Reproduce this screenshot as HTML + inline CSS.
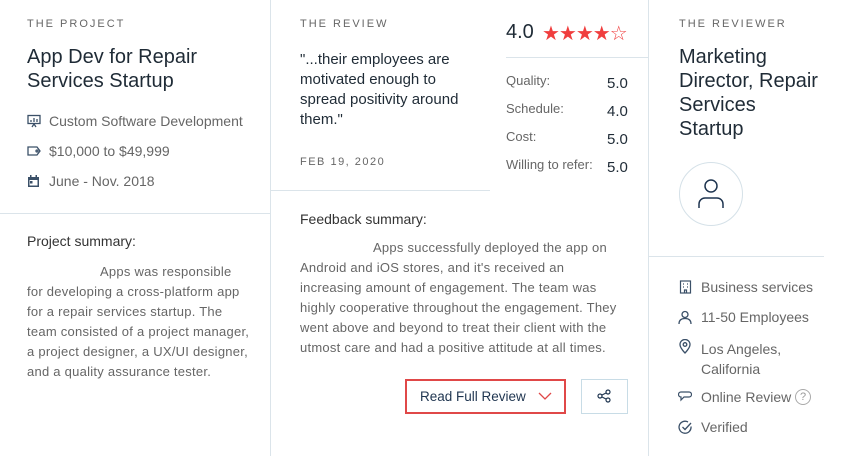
<!DOCTYPE html>
<html><head><style>
*{margin:0;padding:0;box-sizing:border-box}
body{width:852px;height:456px;background:#fff;font-family:"Liberation Sans",sans-serif;position:relative;overflow:hidden;color:#555}
.a{position:absolute;white-space:nowrap}
.lab{font-size:11px;letter-spacing:2px;color:#666}
.h{font-size:20px;color:#1f2b36;line-height:24px}
.g{font-size:14px;color:#666}
.p{font-size:13px;color:#666;line-height:20px;letter-spacing:0.25px}
.v{position:absolute;width:1px;background:#dbe4ea}
.hl{position:absolute;height:1px;background:#dbe4ea}
svg{position:absolute}
</style></head><body>
<div class="v" style="left:270px;top:0;height:456px"></div>
<div class="v" style="left:648px;top:0;height:456px"></div>
<div class="hl" style="left:0;top:213px;width:270px"></div>
<div class="hl" style="left:270px;top:190px;width:220px"></div>
<div class="hl" style="left:506px;top:57px;width:142px"></div>
<div class="hl" style="left:648px;top:256px;width:176px"></div>

<div class="a lab" style="left:27px;top:18px">THE PROJECT</div>
<div class="a h" style="left:27px;top:45px">App Dev for Repair<br>Services Startup</div>
<svg style="left:27px;top:114px" width="14" height="14" viewBox="0 0 14 14" fill="none" stroke="#3b5068" stroke-width="1.3"><rect x="1" y="1.5" width="12" height="8"/><path d="M4 8V6M7 8V4M10 8V5M5 13l2-3 2 3"/></svg>
<div class="a g" style="left:49px;top:113px">Custom Software Development</div>
<svg style="left:27px;top:145px" width="14" height="12" viewBox="0 0 14 12" fill="none" stroke="#3b5068" stroke-width="1.3"><path d="M1 2h9l3 4-3 4H1z"/><circle cx="10" cy="6" r="1"/></svg>
<div class="a g" style="left:49px;top:143px">$10,000 to $49,999</div>
<svg style="left:27px;top:174px" width="13" height="14" viewBox="0 0 13 14" fill="#3b5068"><path d="M1 3h11v10H1zM2.5 6v5.5h8V6z"/><rect x="3" y="1" width="1.5" height="3"/><rect x="8.5" y="1" width="1.5" height="3"/><rect x="3" y="7" width="2.5" height="2.5"/></svg>
<div class="a g" style="left:49px;top:173px">June - Nov. 2018</div>
<div class="a" style="left:27px;top:233px;font-size:14px;color:#333">Project summary:</div>
<div class="a p" style="left:27px;top:262px"><span style="display:inline-block;width:73px"></span>Apps was responsible<br>for developing a cross-platform app<br>for a repair services startup. The<br>team consisted of a project manager,<br>a project designer, a UX/UI designer,<br>and a quality assurance tester.</div>

<div class="a lab" style="left:300px;top:18px">THE REVIEW</div>
<div class="a" style="left:300px;top:50px;font-size:15px;line-height:20px;color:#1f2b36">"...their employees are<br>motivated enough to<br>spread positivity around<br>them."</div>
<div class="a" style="left:300px;top:156px;font-size:11px;letter-spacing:1.5px;color:#666">FEB 19, 2020</div>
<div class="a" style="left:506px;top:21px;font-size:20px;color:#1f2b36">4.0</div>
<div class="a" style="left:542px;top:21px;font-size:20px;color:#f03e3e;letter-spacing:-1px">★★★★☆</div>
<div class="a g" style="left:506px;top:73px;font-size:13px">Quality:</div><div class="a" style="left:607px;top:75px;font-size:15px;color:#1f2b36">5.0</div>
<div class="a g" style="left:506px;top:101px;font-size:13px">Schedule:</div><div class="a" style="left:607px;top:103px;font-size:15px;color:#1f2b36">4.0</div>
<div class="a g" style="left:506px;top:129px;font-size:13px">Cost:</div><div class="a" style="left:607px;top:131px;font-size:15px;color:#1f2b36">5.0</div>
<div class="a g" style="left:506px;top:157px;font-size:13px">Willing to refer:</div><div class="a" style="left:607px;top:159px;font-size:15px;color:#1f2b36">5.0</div>
<div class="a" style="left:300px;top:211px;font-size:14px;color:#333">Feedback summary:</div>
<div class="a p" style="left:300px;top:238px"><span style="display:inline-block;width:73px"></span>Apps successfully deployed the app on<br>Android and iOS stores, and it's received an<br>increasing amount of engagement. The team was<br>highly cooperative throughout the engagement. They<br>went above and beyond to treat their client with the<br>utmost care and had a positive attitude at all times.</div>
<div class="a" style="left:405px;top:379px;width:161px;height:35px;border:2px solid #e04848;font-size:13.5px;color:#1f3550;padding:8px 0 0 13px">Read Full Review</div>
<svg style="left:538px;top:392px" width="14" height="9" viewBox="0 0 14 9" fill="none" stroke="#e04848" stroke-width="1.3"><path d="M1 1l6 6 6-6"/></svg>
<div class="a" style="left:581px;top:379px;width:47px;height:35px;border:1px solid #c8dce6"></div>
<svg style="left:597px;top:389px" width="14" height="14" viewBox="0 0 14 14" fill="none" stroke="#1f3550" stroke-width="1.2"><circle cx="3" cy="7" r="2"/><circle cx="11" cy="3" r="2"/><circle cx="11" cy="11" r="2"/><path d="M5 6l4-2M5 8l4 2"/></svg>

<div class="a lab" style="left:679px;top:18px">THE REVIEWER</div>
<div class="a h" style="left:679px;top:45px">Marketing<br>Director, Repair<br>Services<br>Startup</div>
<div class="a" style="left:679px;top:162px;width:64px;height:64px;border:1px solid #d5e1e8;border-radius:50%"></div>
<svg style="left:694px;top:176px" width="34" height="34" viewBox="0 0 34 34" fill="none" stroke="#1f3550" stroke-width="1.5"><circle cx="17" cy="10" r="6"/><path d="M5 32v-4a6 6 0 0 1 6-6h12a6 6 0 0 1 6 6v4"/></svg>
<svg style="left:679px;top:280px" width="13" height="14" viewBox="0 0 13 14" fill="none" stroke="#3b5068" stroke-width="1.2"><rect x="1.5" y="1" width="10" height="12"/><path d="M4 4h1M8 4h1M4 7h1M8 7h1M5.5 13v-3h2v3"/></svg>
<div class="a g" style="left:701px;top:279px">Business services</div>
<svg style="left:678px;top:310px" width="14" height="14" viewBox="0 0 14 14" fill="none" stroke="#3b5068" stroke-width="1.3"><circle cx="7" cy="4.5" r="3"/><path d="M1 14c0-4 2.5-5.5 6-5.5s6 1.5 6 5.5"/></svg>
<div class="a g" style="left:701px;top:309px">11-50 Employees</div>
<svg style="left:679px;top:339px" width="12" height="15" viewBox="0 0 12 15" fill="none" stroke="#3b5068" stroke-width="1.3"><path d="M6 14S1 9 1 5.5a5 5 0 0 1 10 0C11 9 6 14 6 14z"/><circle cx="6" cy="5.5" r="1.8"/></svg>
<div class="a g" style="left:701px;top:339px;line-height:20px">Los Angeles,<br>California</div>
<svg style="left:678px;top:391px" width="14" height="12" viewBox="0 0 14 12" fill="none" stroke="#3b5068" stroke-width="1.2"><path d="M3 1h8a2.5 2.5 0 0 1 0 5H6l-3 3V6a2.5 2.5 0 0 1 0-5z"/></svg>
<div class="a g" style="left:701px;top:389px">Online Review</div>
<div class="a" style="left:795px;top:389px;width:16px;height:16px;border:1px solid #aaa;border-radius:50%;font-size:11px;color:#999;text-align:center;line-height:14px">?</div>
<svg style="left:678px;top:420px" width="15" height="15" viewBox="0 0 15 15" fill="none" stroke="#3b5068" stroke-width="1.3"><path d="M13 6.5A6 6 0 1 1 10 2"/><path d="M4.5 7l2.5 2.5L13 3"/></svg>
<div class="a g" style="left:701px;top:419px">Verified</div>
</body></html>
